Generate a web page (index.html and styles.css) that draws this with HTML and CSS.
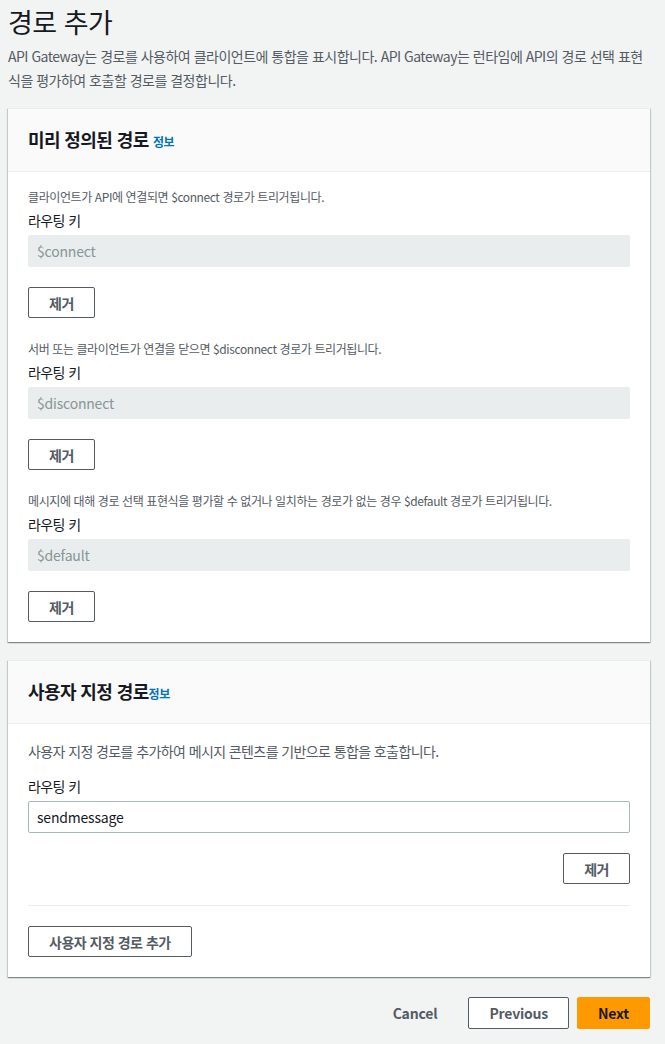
FILE: index.html
```html
<!DOCTYPE html>
<html lang="ko">
<head>
<meta charset="utf-8">
<title>경로 추가</title>
<link rel="stylesheet" href="styles.css">
</head>
<body>
<main class="page">
  <h1 class="page-title">경로 추가</h1>
  <p class="page-desc">API Gateway는 경로를 사용하여 클라이언트에 통합을 표시합니다. API Gateway는 런타임에 API의 경로 선택 표현식을 평가하여 호출할 경로를 결정합니다.</p>

  <section class="card">
    <header class="card-header">
      <h2 class="card-title">미리 정의된 경로 <a class="info" href="#">정보</a></h2>
    </header>
    <div class="card-body predefined">
      <div class="route">
        <p class="route-desc">클라이언트가 API에 연결되면 $connect 경로가 트리거됩니다.</p>
        <label class="field-label">라우팅 키</label>
        <input class="input" type="text" value="$connect" disabled>
        <div class="route-actions"><button class="btn">제거</button></div>
      </div>
      <div class="route">
        <p class="route-desc">서버 또는 클라이언트가 연결을 닫으면 $disconnect 경로가 트리거됩니다.</p>
        <label class="field-label">라우팅 키</label>
        <input class="input" type="text" value="$disconnect" disabled>
        <div class="route-actions"><button class="btn">제거</button></div>
      </div>
      <div class="route">
        <p class="route-desc">메시지에 대해 경로 선택 표현식을 평가할 수 없거나 일치하는 경로가 없는 경우 $default 경로가 트리거됩니다.</p>
        <label class="field-label">라우팅 키</label>
        <input class="input" type="text" value="$default" disabled>
        <div class="route-actions"><button class="btn">제거</button></div>
      </div>
    </div>
  </section>

  <section class="card">
    <header class="card-header">
      <h2 class="card-title">사용자 지정 경로<a class="info" href="#">정보</a></h2>
    </header>
    <div class="card-body custom">
      <p class="custom-desc">사용자 지정 경로를 추가하여 메시지 콘텐츠를 기반으로 통합을 호출합니다.</p>
      <label class="field-label">라우팅 키</label>
      <input class="input active" type="text" value="sendmessage">
      <div class="custom-actions"><button class="btn">제거</button></div>
      <hr class="divider">
      <div class="add-row"><button class="btn add">사용자 지정 경로 추가</button></div>
    </div>
  </section>

  <footer class="footer">
    <button class="btn link">Cancel</button>
    <button class="btn">Previous</button>
    <button class="btn primary">Next</button>
  </footer>
</main>
</body>
</html>
```

FILE: styles.css
```css
* { box-sizing: border-box; }

html, body {
  margin: 0;
  padding: 0;
  background: #f2f3f3;
}

body {
  font-family: "Noto Sans CJK KR", "Noto Sans", sans-serif;
  color: #16191f;
  font-size: 14px;
  line-height: 22px;
}

.page {
  width: 642px;
  margin-left: 8px;
  display: flex;
  flex-direction: column;
}

.page-title {
  margin: 2px 0 0;
  font-size: 27px;
  font-weight: 400;
  line-height: 40px;
  color: #16191f;
  letter-spacing: -0.5px;
}

.page-desc {
  max-width: 642px;
  margin: 2px 0 0;
  font-size: 14px;
  line-height: 24px;
  color: #545b64;
  letter-spacing: -0.5px;
}

.card {
  background: #fff;
  margin-top: 16px;
  border-top: 1px solid #eaeded;
  box-shadow: 0 1px 1px 0 rgba(0,28,36,.3), 1px 1px 1px 0 rgba(0,28,36,.15), -1px 1px 1px 0 rgba(0,28,36,.15);
}

.card + .card { margin-top: 18px; }

.card-header {
  background: #fafafa;
  border-bottom: 1px solid #eaeded;
  height: 63px;
  padding: 0 20px;
  display: flex;
  align-items: center;
}

.card-title {
  margin: 0;
  font-size: 18px;
  font-weight: 700;
  line-height: 22px;
  letter-spacing: -0.6px;
  color: #16191f;
}

.info {
  font-size: 12px;
  font-weight: 700;
  color: #0073bb;
  text-decoration: none;
  letter-spacing: -0.5px;
}

.card-body {
  padding: 16px 20px 20px;
  display: flex;
  flex-direction: column;
}

.route {
  display: flex;
  flex-direction: column;
}

.route + .route { margin-top: 22px; }

.route-desc {
  margin: 0;
  font-size: 12px;
  line-height: 18px;
  color: #545b64;
  letter-spacing: -0.4px;
}

.field-label {
  display: block;
  margin-top: 3px;
  font-size: 14px;
  line-height: 22px;
  color: #16191f;
  letter-spacing: -0.6px;
}

.input {
  margin-top: 4px;
  width: 100%;
  height: 32px;
  padding: 0 8px;
  border: 1px solid #eaeded;
  border-radius: 2px;
  background: #eaeded;
  color: #879596;
  font-family: "Noto Sans CJK KR", "Noto Sans", sans-serif;
  font-size: 14px;
  letter-spacing: -0.2px;
  outline: none;
}

.input.active {
  background: #fff;
  border-color: #aab7b8;
  color: #16191f;
}

.route-actions {
  margin-top: 20px;
  display: flex;
}

.btn {
  height: 31px;
  padding: 0 20px;
  border: 1px solid #545b64;
  border-radius: 2px;
  background: #fff;
  color: #545b64;
  font-family: "Noto Sans CJK KR", "Noto Sans", sans-serif;
  font-size: 14px;
  font-weight: 700;
  letter-spacing: -0.5px;
  cursor: pointer;
}

.btn.add { letter-spacing: -0.5px; }

.custom-desc {
  margin: 0;
  font-size: 14px;
  line-height: 22px;
  color: #545b64;
  letter-spacing: -0.6px;
}

.custom .field-label { margin-top: 13px; }

.custom-actions {
  margin-top: 20px;
  display: flex;
  justify-content: flex-end;
}

.divider {
  margin: 21px 0 0;
  border: 0;
  border-top: 1px solid #eaeded;
  height: 0;
}

.add-row {
  margin-top: 20px;
  display: flex;
}

.footer {
  margin-top: 20px;
  display: flex;
  justify-content: flex-end;
  align-items: center;
  gap: 8px;
}

.footer .btn {
  height: 32px;
  letter-spacing: -0.2px;
}

.btn.link {
  border-color: transparent;
  background: transparent;
  padding: 0 22px;
}

.btn.primary {
  background: #ff9900;
  border-color: #ff9900;
  color: #16191f;
  padding: 0 20px;
}
```
